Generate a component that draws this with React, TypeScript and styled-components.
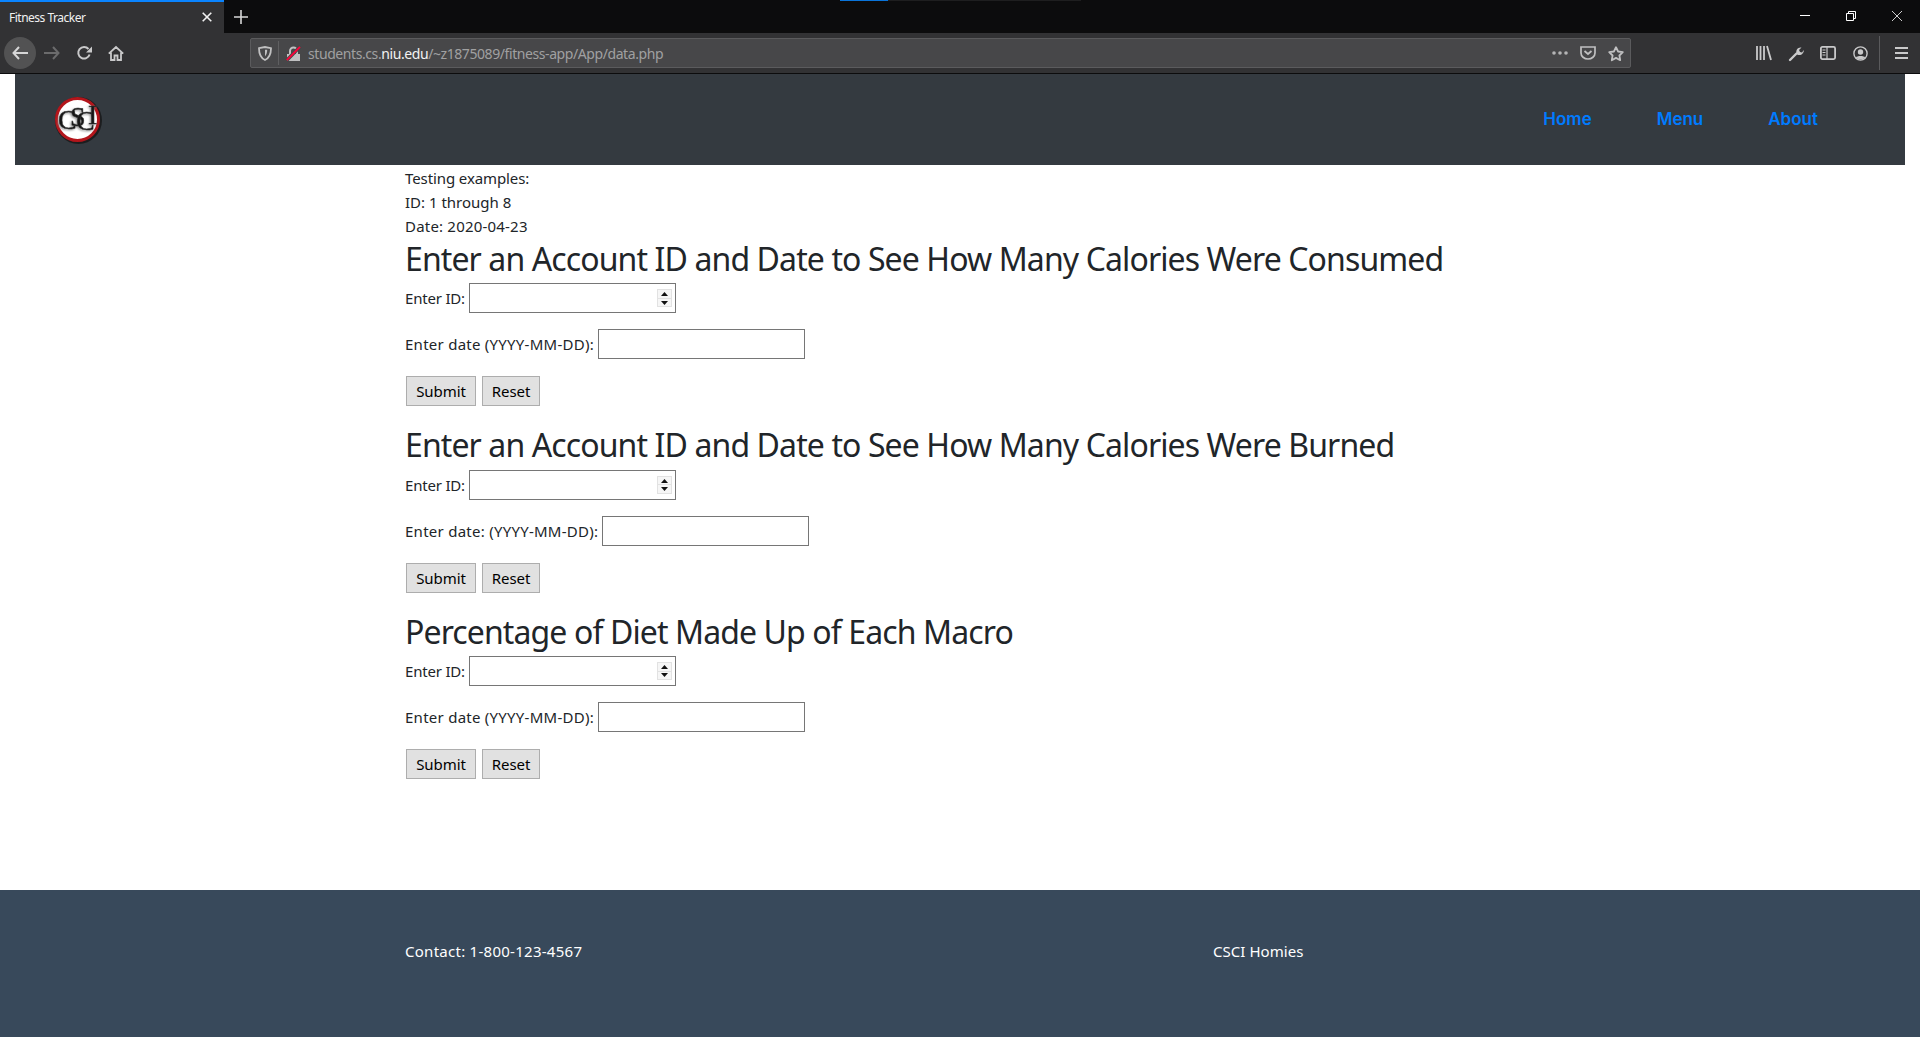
import React from "react";
import styled, { createGlobalStyle } from "styled-components";

const Global = createGlobalStyle`
  html, body { margin: 0; padding: 0; background: #fff; }
  body { font-family: "Noto Sans", "Open Sans", sans-serif; color: #212529; font-size: 16px; }
  * { box-sizing: border-box; }
`;

const Page = styled.div`
  width: 1920px;
  height: 1037px;
  display: flex;
  flex-direction: column;
  overflow: hidden;
`;

const TabStrip = styled.div`
  position: relative;
  height: 33px;
  background: #0c0c0d;
  display: flex;
  align-items: stretch;
`;

const Tab = styled.div`
  width: 224px;
  background: #323234;
  border-top: 2px solid #0a84ff;
  display: flex;
  align-items: center;
  justify-content: space-between;
  padding: 0 12px 1px 9px;
  color: #f1f1f1;
  font-size: 12px;
  letter-spacing: -0.5px;
`;

const NewTab = styled.div`
  width: 34px;
  display: flex;
  align-items: center;
  justify-content: center;
`;

const Spacer = styled.div`
  flex: 1;
`;

const Loader = styled.div`
  position: absolute;
  left: 840px;
  top: 0;
  width: 241px;
  height: 1px;
  background: #1e1e1f;
`;

const LoaderFill = styled.div`
  width: 48px;
  height: 1px;
  background: #0a74da;
`;

const WindowButton = styled.div`
  width: 46px;
  height: 33px;
  display: flex;
  align-items: center;
  justify-content: center;
  padding-bottom: 2px;
`;

const Toolbar = styled.div`
  height: 41px;
  background: #323234;
  border-bottom: 1px solid #0c0c0d;
  display: flex;
  align-items: center;
  padding: 0 3px 0 4px;
`;

const ToolButton = styled.div<{ $active?: boolean }>`
  width: 32px;
  height: 32px;
  border-radius: 50%;
  display: flex;
  align-items: center;
  justify-content: center;
  background: ${(p) => (p.$active ? "#525253" : "transparent")};
`;

const UrlBar = styled.div`
  flex: 1;
  height: 30px;
  margin: 0 117px 0 118px;
  background: #474749;
  border: 1px solid #5b5b5d;
  border-radius: 2px;
  display: flex;
  align-items: center;
  padding: 0 6px 0 7px;
`;

const UrlDivider = styled.div`
  width: 1px;
  height: 24px;
  background: #5f5f61;
  margin: 0 7px 0 6px;
`;

const UrlText = styled.div`
  margin-left: 7px;
  flex: 1;
  font-size: 14px;
  color: #a0a0a1;
  letter-spacing: -0.42px;
  white-space: nowrap;
`;

const UrlHost = styled.span`
  color: #f2f2f2;
`;

const UrlIcon = styled.div`
  width: 16px;
  height: 16px;
  margin-left: 12px;
  display: flex;
  align-items: center;
  justify-content: center;
`;

const ToolDivider = styled.div`
  width: 1px;
  height: 34px;
  background: #5a5a5c;
  margin: 0 5px 0 3px;
`;

const NavWrap = styled.div`
  padding: 0 15px;
`;

const Navbar = styled.nav`
  height: 91px;
  background: #343a40;
  display: flex;
  align-items: center;
  padding-left: 39px;
`;

const NavLinks = styled.div`
  margin-left: auto;
  display: flex;
  gap: 65px;
  padding-right: 87px;
  padding-bottom: 1px;
`;

const NavLink = styled.a`
  color: #007bff;
  font-family: "Inter", sans-serif;
  font-size: 17px;
  font-weight: 600;
  letter-spacing: 0;
`;

const Main = styled.main`
  flex: 1;
  padding: 1px 405px 0;
`;

const Line = styled.div<{ $ls: number }>`
  height: 24px;
  line-height: 24px;
  font-size: 15px;
  letter-spacing: ${(p) => p.$ls}px;
`;

const Section = styled.section`
  height: 186.4px;
  padding-top: 1px;
`;

const Heading = styled.h2`
  margin: 0 0 5px;
  padding-top: 1px;
  font-size: 32px;
  font-weight: 400;
  line-height: 38.4px;
  height: 39.4px;
  white-space: nowrap;
  letter-spacing: -0.89px;
`;

const Field = styled.div`
  display: flex;
  align-items: center;
  height: 30px;
  margin-bottom: 16px;
`;

const Label = styled.label<{ $ls: number }>`
  font-size: 15px;
  letter-spacing: ${(p) => p.$ls}px;
  margin-right: 4px;
  white-space: nowrap;
`;

const InputWrap = styled.div`
  position: relative;
  width: 207px;
  height: 30px;
`;

const TextInput = styled.input`
  width: 207px;
  height: 30px;
  border: 1px solid #767676;
  border-radius: 0;
  background: #fff;
  padding: 0 4px;
  outline: none;
  appearance: textfield;
  &::-webkit-inner-spin-button,
  &::-webkit-outer-spin-button {
    appearance: none;
    margin: 0;
  }
`;

const Spinner = styled.div`
  position: absolute;
  right: 4px;
  top: 6px;
  width: 15px;
  height: 18px;
  background: #e2e2e2;
  padding: 1px;
  display: flex;
  flex-direction: column;
  gap: 1px;
`;

const SpinCell = styled.div`
  flex: 1;
  background: #f6f6f6;
  display: flex;
  align-items: center;
  justify-content: center;
`;

const Buttons = styled.div`
  display: flex;
  gap: 6px;
  margin: 17px 0 0 1px;
`;

const Btn = styled.button<{ $w: number }>`
  width: ${(p) => p.$w}px;
  height: 30px;
  background: #e1e1e1;
  border: 1px solid #adadad;
  border-radius: 0;
  color: #000;
  font-family: inherit;
  font-size: 15px;
  letter-spacing: -0.05px;
  padding: 0;
`;

const Footer = styled.footer`
  height: 147px;
  background: #38495b;
  color: #fff;
  padding: 49px 0 0 404px;
  display: grid;
  grid-template-columns: 808px auto;
  justify-content: start;
  font-size: 15px;
  line-height: 24px;
`;

const FooterText = styled.div<{ $ls: number }>`
  letter-spacing: ${(p) => p.$ls}px;
  padding-left: 1px;
`;

const Ic = styled.svg`
  display: block;
  overflow: visible;
`;

const LogoText = styled.text`
  font-family: "Liberation Serif", serif;
  font-size: 28px;
  fill: #161616;
  stroke: #3a3a3a;
  stroke-width: 0.5px;
  filter: drop-shadow(-1px 1px 1px #8c8c8c);
`;

const stroke = { fill: "none", stroke: "#c9c9ca", strokeWidth: 2 } as const;

const Logo = () => (
  <Ic width="48" height="48" viewBox="0 0 48 48">
    <circle cx="24.5" cy="24.5" r="23.5" fill="#141414" opacity="0.75" />
    <circle cx="23.5" cy="23.5" r="21" fill="#fff" stroke="#b3151b" strokeWidth="3" />
    <LogoText x="4 16 22 34" y="33 30 34 28">CSCI</LogoText>
  </Ic>
);

const SpinArrow = ({ up }: { up?: boolean }) => (
  <Ic width="7" height="4" viewBox="0 0 7 4">
    <path d={up ? "M3.5 0 7 4H0z" : "M0 0h7L3.5 4z"} fill="#111" />
  </Ic>
);

const NumberField = () => (
  <InputWrap>
    <TextInput type="number" />
    <Spinner>
      <SpinCell><SpinArrow up /></SpinCell>
      <SpinCell><SpinArrow /></SpinCell>
    </Spinner>
  </InputWrap>
);

const FormSection = ({ title, dateLabel }: { title: string; dateLabel: string }) => (
  <Section>
    <Heading>{title}</Heading>
    <Field>
      <Label $ls={-0.2}>Enter ID:</Label>
      <NumberField />
    </Field>
    <Field>
      <Label $ls={0.26}>{dateLabel}</Label>
      <TextInput type="text" />
    </Field>
    <Buttons>
      <Btn $w={70}>Submit</Btn>
      <Btn $w={58}>Reset</Btn>
    </Buttons>
  </Section>
);

export default function App() {
  return (
    <Page>
      <Global />
      <TabStrip>
        <Tab>
          <span>Fitness Tracker</span>
          <Ic width="10" height="10" viewBox="0 0 10 10">
            <path d="M.7.7l8.6 8.6M9.3.7.7 9.3" fill="none" stroke="#f1f1f1" strokeWidth="1.6" />
          </Ic>
        </Tab>
        <NewTab>
          <Ic width="14" height="14" viewBox="0 0 14 14">
            <path d="M7 0v14M0 7h14" fill="none" stroke="#d8d8d8" strokeWidth="1.6" />
          </Ic>
        </NewTab>
        <Spacer />
        <Loader><LoaderFill /></Loader>
        <WindowButton>
          <Ic width="10" height="1" viewBox="0 0 10 1"><path d="M0 .5h10" stroke="#fff" strokeWidth="1" /></Ic>
        </WindowButton>
        <WindowButton>
          <Ic width="10" height="10" viewBox="0 0 10 10">
            <path d="M.5 2.5h7v7h-7zM2.5 2.5v-2h7v7h-2" fill="none" stroke="#fff" strokeWidth="1" />
          </Ic>
        </WindowButton>
        <WindowButton>
          <Ic width="10" height="10" viewBox="0 0 10 10">
            <path d="M0 0l10 10M10 0 0 10" fill="none" stroke="#fff" strokeWidth="0.8" />
          </Ic>
        </WindowButton>
      </TabStrip>
      <Toolbar>
        <ToolButton $active>
          <Ic width="16" height="14" viewBox="0 0 16 14">
            <path d="M7 1 1.5 7 7 13M1.5 7H16" fill="none" stroke="#d6d6d7" strokeWidth="2" />
          </Ic>
        </ToolButton>
        <ToolButton>
          <Ic width="16" height="14" viewBox="0 0 16 14">
            <path d="M9 1l5.5 6L9 13M14.5 7H0" fill="none" stroke="#6b6b6c" strokeWidth="2" />
          </Ic>
        </ToolButton>
        <ToolButton>
          <Ic width="15" height="14" viewBox="0 0 15 14">
            <path d="M12.6 8.5A5.8 5.8 0 1 1 11.5 3" {...stroke} />
            <path d="M15 0.5v6H9z" fill="#c9c9ca" />
          </Ic>
        </ToolButton>
        <ToolButton>
          <Ic width="16" height="15" viewBox="0 0 16 15">
            <path d="M.8 7.7 8 1l7.2 6.7M3 6.5V14h3.5V9.5h3V14H13V6.5" {...stroke} strokeWidth={1.8} />
          </Ic>
        </ToolButton>
        <UrlBar>
          <Ic width="14" height="15" viewBox="0 0 14 15">
            <path d="M1 2.2C3 1.8 5 1.4 7 1c2 .4 4 .8 6 1.2 0 5-1.3 9.5-6 11.8C2.3 11.700 1 7.200 1 2.200z" fill="none" stroke="#c0c0c1" strokeWidth="1.8" />
            <path d="M7 3.8h2.2c0 2.800-.7 5-2.200 6.400z" fill="#c0c0c1" />
          </Ic>
          <UrlDivider />
          <Ic width="15" height="15" viewBox="0 0 15 15">
            <path d="M1 8h13v7H1z" fill="#c0c0c1" />
            <path d="M4 8V5a3.5 3.5 0 0 1 7 0v3" fill="none" stroke="#c0c0c1" strokeWidth="2" />
            <path d="M14 .8.8 14.2" stroke="#474749" strokeWidth="3.5" />
            <path d="M14 .8.8 14.2" stroke="#ff0039" strokeWidth="1.8" />
          </Ic>
          <UrlText>
            students.cs.<UrlHost>niu.edu</UrlHost>/~z1875089/fitness-app/App/data.php
          </UrlText>
          <UrlIcon>
            <Ic width="16" height="4" viewBox="0 0 16 4" fill="#b4b4b5">
              <circle cx="2" cy="2" r="1.8" /><circle cx="8" cy="2" r="1.8" /><circle cx="14" cy="2" r="1.8" />
            </Ic>
          </UrlIcon>
          <UrlIcon>
            <Ic width="16" height="14" viewBox="0 0 16 14">
              <path d="M1 1h14v6a7 6 0 0 1-14 0z" fill="none" stroke="#c0c0c1" strokeWidth="1.7" />
              <path d="M4.5 5 8 8l3.5-3" fill="none" stroke="#c0c0c1" strokeWidth="1.8" />
            </Ic>
          </UrlIcon>
          <UrlIcon>
            <Ic width="16" height="15" viewBox="0 0 16 15">
              <path d="M8 1.2l2.1 4.3 4.7.7-3.4 3.3.8 4.7L8 11.900 3.800 14.200l.8-4.700L1.200 6.200l4.700-.7z" fill="none" stroke="#c0c0c1" strokeWidth="1.8" strokeLinejoin="round" />
            </Ic>
          </UrlIcon>
        </UrlBar>
        <ToolButton>
          <Ic width="16" height="14" viewBox="0 0 16 14">
            <path d="M1 0v14M4.5 0v14M8 0v14M11 0l4 14" fill="none" stroke="#c9c9ca" strokeWidth="1.8" />
          </Ic>
        </ToolButton>
        <ToolButton>
          <Ic width="15" height="15" viewBox="0 0 15 15">
            <path d="M1 14l6.5-6.5" fill="none" stroke="#c9c9ca" strokeWidth="2.4" strokeLinecap="round" />
            <path d="M7.5 7.500C6.500 4 9 .8 12.500 1.500L10 4l1 2 2 .5L14.800 4c.3 3.500-3 6-6.300 4.700z" fill="#c9c9ca" />
          </Ic>
        </ToolButton>
        <ToolButton>
          <Ic width="16" height="14" viewBox="0 0 16 14">
            <rect x=".9" y=".9" width="14.2" height="12.2" rx="1.5" fill="none" stroke="#c9c9ca" strokeWidth="1.8" />
            <path d="M7 1v12M2.5 4h3M2.5 6.500h3M2.500 9h3" fill="none" stroke="#c9c9ca" strokeWidth="1.2" />
          </Ic>
        </ToolButton>
        <ToolButton>
          <Ic width="15" height="15" viewBox="0 0 15 15">
            <circle cx="7.5" cy="7.5" r="6.6" fill="none" stroke="#c9c9ca" strokeWidth="1.4" />
            <circle cx="7.5" cy="6" r="2.7" fill="#c9c9ca" />
            <path d="M2.8 11.500C4 9.500 11 9.500 12.200 11.500 10 14 5 14 2.800 11.500z" fill="#c9c9ca" />
          </Ic>
        </ToolButton>
        <ToolDivider />
        <ToolButton>
          <Ic width="13" height="12" viewBox="0 0 13 12">
            <path d="M0 1h13M0 6h13M0 11h13" fill="none" stroke="#c9c9ca" strokeWidth="2" />
          </Ic>
        </ToolButton>
      </Toolbar>
      <NavWrap>
        <Navbar>
          <Logo />
          <NavLinks>
            <NavLink>Home</NavLink>
            <NavLink>Menu</NavLink>
            <NavLink>About</NavLink>
          </NavLinks>
        </Navbar>
      </NavWrap>
      <Main>
        <Line $ls={-0.1}>Testing examples:</Line>
        <Line $ls={0}>ID: 1 through 8</Line>
        <Line $ls={0.2}>Date: 2020-04-23</Line>
        <FormSection title="Enter an Account ID and Date to See How Many Calories Were Consumed" dateLabel="Enter date (YYYY-MM-DD):" />
        <FormSection title="Enter an Account ID and Date to See How Many Calories Were Burned" dateLabel="Enter date: (YYYY-MM-DD):" />
        <FormSection title="Percentage of Diet Made Up of Each Macro" dateLabel="Enter date (YYYY-MM-DD):" />
      </Main>
      <Footer>
        <FooterText $ls={0.27}>Contact: 1-800-123-4567</FooterText>
        <FooterText $ls={0.05}>CSCI Homies</FooterText>
      </Footer>
    </Page>
  );
}
